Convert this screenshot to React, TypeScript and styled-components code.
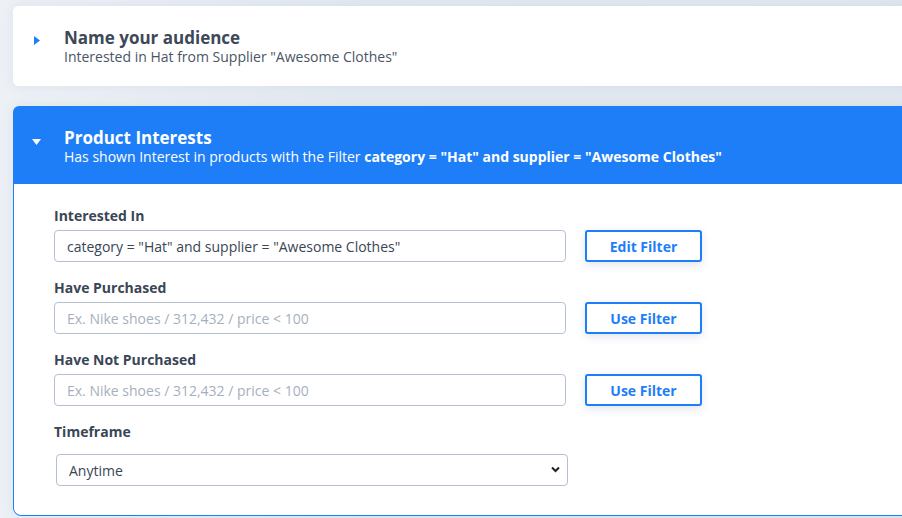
import React from 'react'
import styled, { createGlobalStyle } from 'styled-components'

const GlobalStyle = createGlobalStyle`
  html, body {
    margin: 0;
    padding: 0;
  }
  body {
    font-family: 'Open Sans', 'Noto Sans', sans-serif;
    background: linear-gradient(90deg, #edf1f6 0%, #e3e9f1 40%, #e1e7ef 100%);
    overflow: hidden;
  }
`

const Page = styled.div`
  width: 902px;
  height: 518px;
  padding: 6px 0 0 13px;
  box-sizing: border-box;
  display: flex;
  flex-direction: column;
  gap: 20px;
  overflow: hidden;
`

const Card = styled.section`
  margin-right: -12px;
  background: #ffffff;
  border-radius: 6px;
  box-shadow: 0 0 12px rgba(150, 165, 190, 0.18);
`

const Header = styled.div<{ $active?: boolean }>`
  display: flex;
  align-items: flex-start;
  height: ${p => (p.$active ? 78 : 80)}px;
  box-sizing: border-box;
  padding-top: 21px;
  background: ${p => (p.$active ? '#1e7ef8' : '#ffffff')};
  color: ${p => (p.$active ? '#ffffff' : '#3d4858')};
  border-radius: ${p => (p.$active ? '6px 6px 0 0' : '6px')};
`

const Caret = styled.div<{ $open?: boolean }>`
  width: 51px;
  display: flex;
  justify-content: center;
  padding-top: ${p => (p.$open ? 12 : 9)}px;
  padding-right: 4px;
  box-sizing: border-box;
`

const Titles = styled.div`
  display: flex;
  flex-direction: column;
`

const Title = styled.div`
  font-size: 17px;
  font-weight: 700;
  line-height: 21px;
`

const Subtitle = styled.div<{ $active?: boolean }>`
  font-size: 14px;
  line-height: 17px;
  color: ${p => (p.$active ? '#ffffff' : '#4a5566')};

  b {
    font-weight: 700;
  }
`

const Body = styled.div`
  border: 1px solid #1e7ef8;
  border-top: none;
  border-radius: 0 0 8px 8px;
  padding: 22px 0 29px 40px;
  display: flex;
  flex-direction: column;
`

const Field = styled.div<{ $last?: boolean }>`
  display: flex;
  flex-direction: column;
  margin-bottom: ${p => (p.$last ? 0 : 16)}px;
`

const Label = styled.label`
  font-size: 14px;
  font-weight: 700;
  line-height: 20px;
  color: #3a4556;
  margin-bottom: 4px;
`

const Row = styled.div`
  display: flex;
  align-items: center;
  gap: 19px;
`

const Input = styled.input`
  width: 512px;
  height: 32px;
  box-sizing: border-box;
  border: 1px solid #b4bfd2;
  border-radius: 4px;
  padding: 0 12px;
  font-family: 'Open Sans', 'Noto Sans', sans-serif;
  font-size: 14px;
  color: #3a4556;
  outline: none;

  &::placeholder {
    color: #a6afbd;
  }
`

const FilterButton = styled.button`
  width: 117px;
  height: 32px;
  box-sizing: border-box;
  border: 2px solid #1e7ef8;
  border-radius: 3px;
  background: #ffffff;
  color: #1e7ef8;
  font-family: 'Open Sans', 'Noto Sans', sans-serif;
  font-size: 14px;
  font-weight: 700;
  box-shadow: 0 3px 8px rgba(60, 90, 140, 0.15);
  cursor: pointer;
`

const SelectWrap = styled.div`
  position: relative;
  width: 512px;
  margin: 8px 0 0 2px;
`

const Select = styled.select`
  appearance: none;
  width: 100%;
  height: 32px;
  box-sizing: border-box;
  border: 1px solid #b4bfd2;
  border-radius: 4px;
  padding: 0 12px;
  background: #ffffff;
  font-family: 'Open Sans', 'Noto Sans', sans-serif;
  font-size: 14px;
  color: #3a4556;
  outline: none;
`

const Chevron = styled.svg`
  position: absolute;
  right: 8px;
  top: 12px;
  pointer-events: none;
`

const RightTriangle = () => (
  <svg width="6" height="9" viewBox="0 0 6 9">
    <path d="M0 0 L6 4.5 L0 9 Z" fill="#1e7ef8" />
  </svg>
)

const DownTriangle = () => (
  <svg width="9" height="6" viewBox="0 0 9 6">
    <path d="M0 0 L9 0 L4.5 6 Z" fill="#ffffff" />
  </svg>
)

type FilterFieldProps = {
  label: string
  value?: string
  action: string
}

const FilterField = ({ label, value, action }: FilterFieldProps) => (
  <Field>
    <Label>{label}</Label>
    <Row>
      <Input
        defaultValue={value}
        placeholder="Ex. Nike shoes / 312,432 / price < 100"
      />
      <FilterButton>{action}</FilterButton>
    </Row>
  </Field>
)

const App = () => (
  <>
    <GlobalStyle />
    <Page>
      <Card>
        <Header>
          <Caret>
            <RightTriangle />
          </Caret>
          <Titles>
            <Title>Name your audience</Title>
            <Subtitle>Interested in Hat from Supplier "Awesome Clothes"</Subtitle>
          </Titles>
        </Header>
      </Card>

      <Card>
        <Header $active>
          <Caret $open>
            <DownTriangle />
          </Caret>
          <Titles>
            <Title>Product Interests</Title>
            <Subtitle $active>
              Has shown Interest in products with the Filter{' '}
              <b>category = "Hat" and supplier = "Awesome Clothes"</b>
            </Subtitle>
          </Titles>
        </Header>
        <Body>
          <FilterField
            label="Interested In"
            value={'category = "Hat" and supplier = "Awesome Clothes"'}
            action="Edit Filter"
          />
          <FilterField label="Have Purchased" action="Use Filter" />
          <FilterField label="Have Not Purchased" action="Use Filter" />
          <Field $last>
            <Label>Timeframe</Label>
            <SelectWrap>
              <Select defaultValue="anytime">
                <option value="anytime">Anytime</option>
                <option value="30">Last 30 days</option>
                <option value="90">Last 90 days</option>
              </Select>
              <Chevron width="9" height="7" viewBox="0 0 9 7">
                <path
                  d="M1 1.5 L4.5 5 L8 1.5"
                  fill="none"
                  stroke="#222"
                  strokeWidth="2"
                />
              </Chevron>
            </SelectWrap>
          </Field>
        </Body>
      </Card>
    </Page>
  </>
)

export default App
